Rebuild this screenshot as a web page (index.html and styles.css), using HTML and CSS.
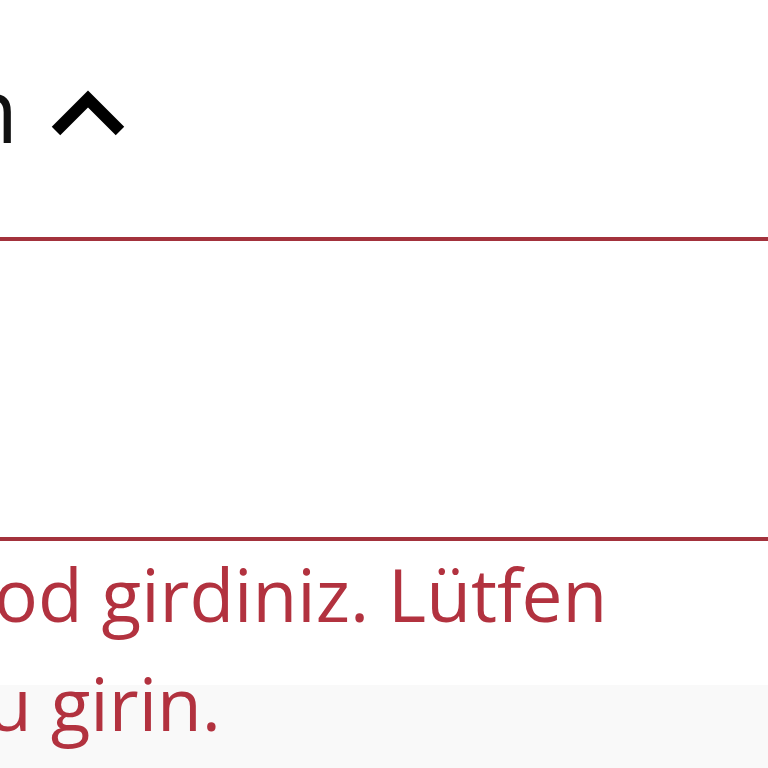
FILE: index.html
```html
<!DOCTYPE html>
<html lang="tr">
<head>
<meta charset="utf-8">
<title>Kod</title>
<link rel="stylesheet" href="styles.css">
</head>
<body>
<div class="page">
  <div class="header">
    <span class="label">n</span>
    <svg class="chevron" width="130" height="90" viewBox="0 0 130 90" aria-hidden="true">
      <polyline points="38,68 70,36 102,68" fill="none" stroke="#000" stroke-width="12" stroke-linecap="butt" stroke-linejoin="miter"/>
    </svg>
  </div>
  <div class="field"></div>
  <div class="error">
    <div class="line line-1">od girdiniz. Lütfen</div>
    <div class="line line-2">u girin.</div>
  </div>
</div>
</body>
</html>
```
FILE: styles.css
```css
html, body {
  margin: 0;
  padding: 0;
  height: 100%;
}
body {
  overflow: hidden;
  background: linear-gradient(#ffffff 685px, #f9f9f9 685px);
  font-family: "Open Sans", "Noto Sans", sans-serif;
}
.page {
  width: 768px;
  height: 768px;
  overflow: hidden;
}
.header {
  height: 237px;
  box-sizing: border-box;
  padding-top: 63px;
  display: flex;
  align-items: flex-start;
}
.label {
  font-size: 90px;
  line-height: 90px;
  color: #111;
  margin-left: -37px;
}
.chevron {
  display: block;
  flex: none;
}
.field {
  height: 304px;
  box-sizing: border-box;
  border: 4px solid #a3323c;
  margin: 0 -20px;
  background: #fff;
}
.error {
  color: #b2323f;
  font-size: 73px;
  line-height: 109px;
  white-space: nowrap;
  margin-top: -2px;
}
.line-1 {
  margin-left: -6px;
}
.line-2 {
  margin-left: -13px;
}
```
